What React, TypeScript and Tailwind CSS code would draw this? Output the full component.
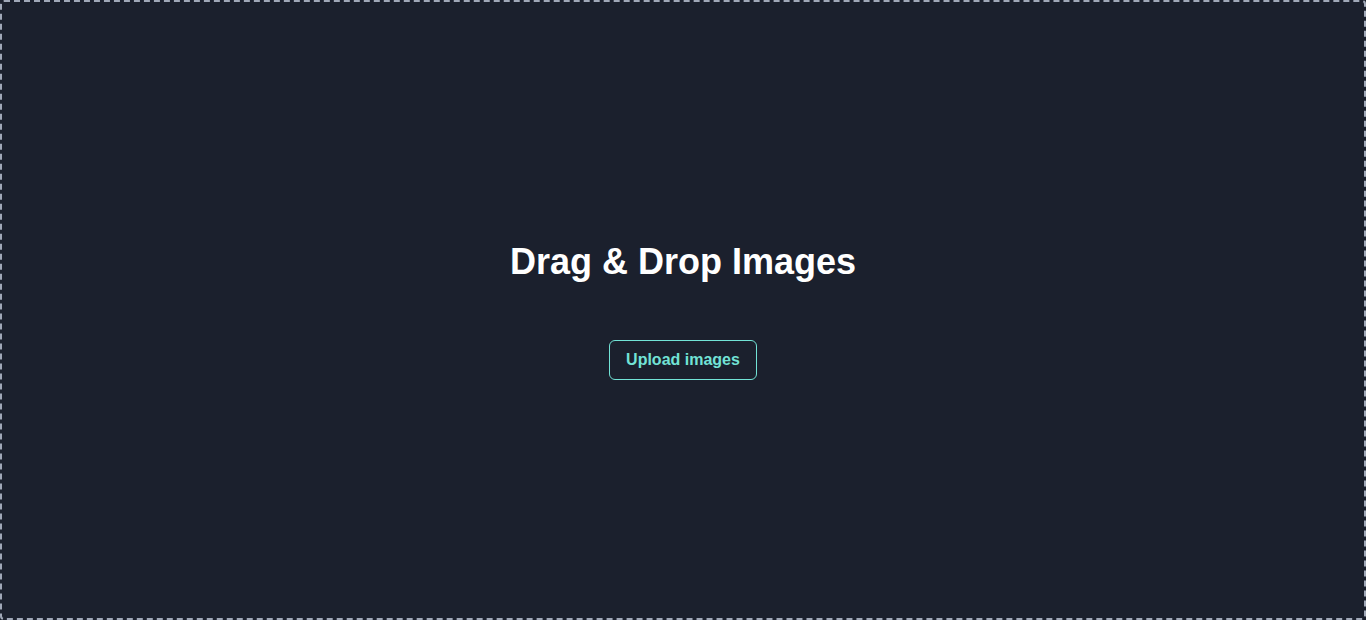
export default function App() {
  return (
    <div className="h-screen w-full bg-[#1b202d]" style={{ fontFamily: '"Liberation Sans", Arial, sans-serif' }}>
      <div className="flex h-full w-full flex-col items-center justify-center rounded-[4px] border-2 border-dashed border-[#a0a8b8]">
        <h1 className="text-4xl font-bold leading-[42px] text-white">Drag &amp; Drop Images</h1>
        <button className="mt-[57px] flex h-10 items-center rounded-md border border-[#72e3d6] px-4 text-base font-bold text-[#72e3d6]">
          Upload images
        </button>
      </div>
    </div>
  );
}
